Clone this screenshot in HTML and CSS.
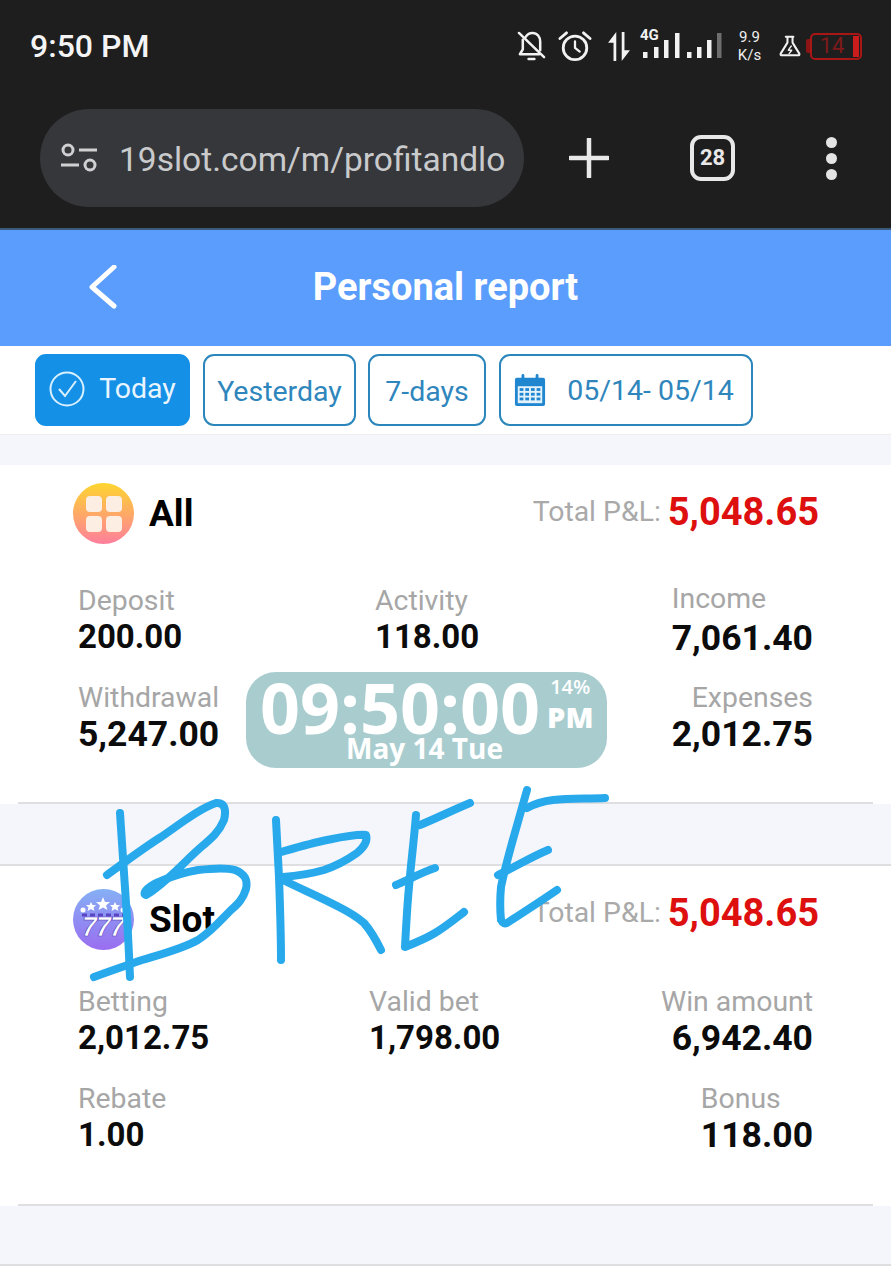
FILE: index.html
```html
<!DOCTYPE html>
<html lang="en">
	<head>
		<meta charset="UTF-8" />
		<title>Personal report</title>
		<link rel="stylesheet" href="styles.css">
	</head>

	<body>
		<div class="screen">
			<div class="browser-top">
				<div class="status-bar">
					<div class="clock-text">9:50 PM</div>
					<div class="status-icons">
						<svg class="ic-bell" viewBox="0 0 30 32" width="29" height="31" fill="none" stroke="#f2f2f2" stroke-width="2.6" stroke-linecap="round" stroke-linejoin="round">
							<path d="M9 6 C11 3 14 2 16 2 C21 2 24 6 24 11 V20" />
							<path d="M6 9 V19 L3 24 H23" />
							<path d="M2 2 L28 27" />
							<path d="M12 29 H18" />
						</svg>
						<svg class="ic-alarm" viewBox="0 0 36 34" width="34" height="32" fill="none" stroke="#f2f2f2" stroke-width="3" stroke-linecap="round" stroke-linejoin="round">
							<circle cx="18" cy="19" r="12.5" />
							<path d="M18 12 V19 L23 23" stroke-width="2.4" />
							<path d="M2 9 L9 3" />
							<path d="M34 9 L27 3" />
						</svg>
						<svg class="ic-arrows" viewBox="0 0 26 34" width="24" height="31" fill="#f2f2f2">
							<path d="M7 33 H10 V1 L1 13 H7 Z" />
							<path d="M16 1 H19 V21 H25 L16 33 Z" />
						</svg>
						<div class="signal">
							<span class="net-label">4G</span>
							<svg viewBox="0 0 80 26" width="80" height="26" fill="#f2f2f2">
								<rect x="0" y="19" width="4.500" height="6" />
								<rect x="11" y="14" width="4.500" height="11" />
								<rect x="21" y="7" width="4.500" height="18" />
								<rect x="32" y="0" width="4.500" height="25" />
								<rect x="44" y="19" width="4.500" height="6" />
								<rect x="54" y="14" width="4.500" height="11" />
								<rect x="64" y="7" width="4.500" height="18" />
								<rect x="74" y="0" width="4.500" height="25" fill="#6e6e6e" />
							</svg>
						</div>
						<div class="speed"><span>9.9</span><span>K/s</span></div>
						<svg class="ic-flask" viewBox="0 0 26 26" width="22" height="22" fill="none" stroke="#f2f2f2" stroke-width="2.4" stroke-linejoin="round" stroke-linecap="round">
							<path d="M8 2 H17 M10 2 V9 L2 22 C1.500 23.500 2 24 4 24 H22 C24 24 24.500 23.500 24 22 L16 9 V2" />
							<path d="M14.500 13 L11 18 H15 L12 22" stroke-width="1.600" />
						</svg>
						<div class="battery">
							<div class="battery-tip"></div>
							<div class="battery-body">14<span class="battery-fill"></span></div>
						</div>
					</div>
				</div>
				<div class="tool-bar">
					<div class="url-pill">
						<svg viewBox="0 0 38 30" width="38" height="30" fill="none" stroke="#d0d0d2" stroke-width="3">
							<circle cx="8" cy="7" r="5" />
							<path d="M19 7 H37" />
							<path d="M1 22 H19" />
							<circle cx="30" cy="22" r="5" />
						</svg>
						<span class="url-text">19slot.com/m/profitandlo</span>
					</div>
					<div class="tool-actions">
						<svg viewBox="0 0 40 40" width="40" height="40" stroke="#e8e8e8" stroke-width="4.500" stroke-linecap="round">
							<path d="M20 1 V39" />
							<path d="M1 20 H39" />
						</svg>
						<div class="tab-count">28</div>
						<div class="dots"><span></span><span></span><span></span></div>
					</div>
				</div>
			</div>

			<div class="page-head">
				<svg class="back-arrow" viewBox="0 0 28 44" width="28" height="44" fill="none" stroke="#fff" stroke-width="5" stroke-linecap="round" stroke-linejoin="round">
					<path d="M25 2 L3 22 L25 41" />
				</svg>
				<h1>Personal report</h1>
			</div>

			<div class="filter-bar">
				<div class="chip chip-active">
					<svg viewBox="0 0 36 36" width="36" height="36" fill="none" stroke="#d8f0ff" stroke-width="2">
						<circle cx="18" cy="18" r="16.500" />
						<path d="M10 18 L16 25 L27 10" />
					</svg>
					<span>Today</span>
				</div>
				<div class="chip chip-yesterday">Yesterday</div>
				<div class="chip chip-week">7-days</div>
				<div class="chip chip-date">
					<svg viewBox="0 0 34 36" width="32" height="34">
						<rect x="1" y="5" width="32" height="30" rx="2" fill="#1f86cf" />
						<rect x="4" y="14" width="26" height="18" fill="#e4f2fb" />
						<rect x="8" y="1" width="3" height="8" rx="1.500" fill="#1f86cf" />
						<rect x="23" y="1" width="3" height="8" rx="1.500" fill="#1f86cf" />
						<g fill="#1f86cf">
							<rect x="6" y="16" width="4" height="3" /><rect x="12" y="16" width="4" height="3" /><rect x="18" y="16" width="4" height="3" /><rect x="24" y="16" width="4" height="3" />
							<rect x="6" y="21" width="4" height="3" /><rect x="12" y="21" width="4" height="3" /><rect x="18" y="21" width="4" height="3" /><rect x="24" y="21" width="4" height="3" />
							<rect x="6" y="26" width="4" height="3" /><rect x="12" y="26" width="4" height="3" /><rect x="18" y="26" width="4" height="3" /><rect x="24" y="26" width="4" height="3" />
						</g>
					</svg>
					<span>05/14- 05/14</span>
				</div>
			</div>

			<div class="gap gap-top"></div>

			<div class="report-card">
				<div class="card-body card-body-all">
					<div class="card-head">
						<div class="card-title">
							<div class="round-ic ic-all"><i></i><i></i><i></i><i></i></div>
							<span>All</span>
						</div>
						<div class="pnl"><span class="pnl-label">Total P&amp;L:</span><span class="pnl-value">5,048.65</span></div>
					</div>
					<div class="stat-grid">
						<div class="stat"><div class="stat-label">Deposit</div><div class="stat-value">200.00</div></div>
						<div class="stat stat-mid"><div class="stat-label">Activity</div><div class="stat-value">118.00</div></div>
						<div class="stat stat-right stat-income"><div class="stat-label">Income</div><div class="stat-value stat-large">7,061.40</div></div>
						<div class="stat"><div class="stat-label">Withdrawal</div><div class="stat-value stat-large">5,247.00</div></div>
						<div class="stat stat-mid"></div>
						<div class="stat stat-right stat-end"><div class="stat-label">Expenses</div><div class="stat-value stat-large">2,012.75</div></div>
					</div>
				</div>
				<div class="card-line"></div>
			</div>

			<div class="gap gap-mid"></div>

			<div class="report-card">
				<div class="card-body">
					<div class="card-head">
						<div class="card-title title-slot">
							<div class="round-ic ic-slot">
								<svg viewBox="0 0 60 60" width="60" height="60">
									<g fill="#fff">
										<path d="M30 8 L32 13 L37 13 L33 16.500 L34.500 21 L30 18.500 L25.500 21 L27 16.500 L23 13 L28 13 Z" />
										<path d="M18 13 L19.500 16 L23 16 L20.500 18.500 L21.500 22 L18 20 L14.500 22 L15.500 18.500 L13 16 L16.500 16 Z" />
										<path d="M42 13 L43.500 16 L47 16 L44.500 18.500 L45.500 22 L42 20 L38.500 22 L39.500 18.500 L37 16 L40.500 16 Z" />
										<circle cx="10" cy="21" r="2.500" />
										<circle cx="50" cy="21" r="2.500" />
									</g>
									<path d="M9 26 H51" stroke="#5a46c4" stroke-width="3" stroke-dasharray="5 3" />
									<text x="30" y="47" text-anchor="middle" class="slot-sevens">777</text>
								</svg>
							</div>
							<span>Slot</span>
						</div>
						<div class="pnl"><span class="pnl-label">Total P&amp;L:</span><span class="pnl-value">5,048.65</span></div>
					</div>
					<div class="stat-grid">
						<div class="stat"><div class="stat-label">Betting</div><div class="stat-value">2,012.75</div></div>
						<div class="stat stat-mid stat-mid-slot"><div class="stat-label">Valid bet</div><div class="stat-value">1,798.00</div></div>
						<div class="stat stat-right stat-end"><div class="stat-label">Win amount</div><div class="stat-value stat-large">6,942.40</div></div>
						<div class="stat"><div class="stat-label">Rebate</div><div class="stat-value">1.00</div></div>
						<div class="stat stat-mid"></div>
						<div class="stat stat-right"><div class="stat-label">Bonus</div><div class="stat-value stat-large">118.00</div></div>
					</div>
				</div>
				<div class="card-line"></div>
			</div>

			<div class="gap gap-tail"></div>

			<div class="clock-widget">
				<div class="widget-main">
					<span class="widget-time">09:50:00</span>
					<div class="widget-side"><span>14%</span><b>PM</b></div>
				</div>
				<div class="widget-date">May 14 Tue</div>
			</div>

			<svg class="scribble" viewBox="0 0 891 1280" width="891" height="1280" fill="none" stroke="#27a9ec" stroke-width="8" stroke-linecap="round" stroke-linejoin="round">
				<path d="M120 813 C122 845 124 875 126 903 C128 930 129 955 130 977" />
				<path d="M107 875 C125 862 142 849 161 837 C180 824 200 808 216 803 C226 802 226 812 224 820 C219 832 212 838 200 848 C184 862 165 884 146 895 C141 893 150 885 161 881 C175 875 186 872 198 870 C215 868 228 868 235 870 C245 874 248 880 246 889 C243 899 238 904 231 910 C220 921 212 931 198 940 C182 949 162 954 142 960 C125 966 110 971 94 977" />
				<path d="M276 820 C277 840 278 858 279 877 C280 905 281 935 281 960" />
				<path d="M281 852 C295 848 312 843 327 840 C342 837 356 834 366 835 C368 841 363 848 357 853 C347 860 336 866 324 870 C310 874 297 876 283 877" />
				<path d="M283 880 C301 889 320 897 339 907 C349 912 357 917 364 923 C371 931 376 940 381 950" />
				<path d="M416 815 C414 840 411 863 409 887 C407 908 406 928 405 947 C415 943 425 939 435 933 C445 927 455 919 464 912" />
				<path d="M420 825 C437 818 453 810 470 803" />
				<path d="M396 885 C409 880 422 872 435 868" />
				<path d="M527 790 C522 808 517 825 512 843 C508 858 504 872 501 887 C500 898 500 910 501 920 C503 924 505 924 507 923 C524 912 541 901 557 890" />
				<path d="M527 808 C536 803 544 801 553 800 C570 798 588 799 605 798" />
				<path d="M498 875 C515 867 531 857 548 850" />
			</svg>
		</div>
	</body>
</html>
```

FILE: styles.css
```css
* {
	box-sizing: border-box;
}

html,
body {
	margin: 0;
	padding: 0;
}

body {
	width: 891px;
	height: 1280px;
	overflow: hidden;
	background: #fff;
	font-family: Roboto, "Liberation Sans", sans-serif;
}

.screen {
	position: relative;
	width: 891px;
	height: 1280px;
	overflow: hidden;
}

/* phone + browser chrome */
.browser-top {
	height: 230px;
	background: #1e1e1e;
	border-bottom: 2px solid #3c5a7c;
}

.status-bar {
	height: 92px;
	padding: 0 29px 0 30px;
	display: flex;
	justify-content: space-between;
	align-items: center;
}

.clock-text {
	color: #f4f4f4;
	font-size: 32px;
	font-weight: 500;
}

.status-icons {
	display: flex;
	align-items: center;
}

.ic-bell {
	margin-right: 12px;
}

.ic-alarm {
	margin-right: 15px;
}

.ic-arrows {
	margin-right: 8px;
}

.signal {
	position: relative;
	width: 84px;
	height: 34px;
	display: flex;
	align-items: flex-end;
	padding: 0 0 4px 4px;
	margin-right: 14px;
}

.net-label {
	position: absolute;
	left: 1px;
	top: -3px;
	color: #f2f2f2;
	font-size: 15px;
	font-weight: 700;
}

.speed {
	display: flex;
	flex-direction: column;
	align-items: center;
	width: 25px;
	color: #eee;
	font-size: 15px;
	line-height: 18px;
	margin-right: 17px;
}

.ic-flask {
	margin-right: 5px;
}

.battery {
	display: flex;
	align-items: center;
	width: 56px;
	height: 28px;
}

.battery-tip {
	width: 4px;
	height: 14px;
	background: #8d1414;
	border-radius: 2px 0 0 2px;
}

.battery-body {
	position: relative;
	flex: 1;
	height: 27px;
	border: 2.500px solid #a81616;
	border-radius: 5px;
	color: #7e1a1a;
	font-size: 22px;
	line-height: 22px;
	text-align: center;
	padding-right: 8px;
}

.battery-fill {
	position: absolute;
	right: 1px;
	top: 1px;
	bottom: 1px;
	width: 6px;
	background: #cc1c1c;
}

.tool-bar {
	display: flex;
	align-items: flex-start;
	padding: 17px 0 0 40px;
}

.url-pill {
	width: 484px;
	height: 98px;
	border-radius: 49px;
	background: #36373b;
	display: flex;
	align-items: center;
	padding-left: 20px;
	gap: 21px;
}

.url-text {
	margin-top: 3px;
	color: #c9cacc;
	font-size: 33.500px;
	white-space: nowrap;
	width: 387px;
	overflow: hidden;
}

.tool-actions {
	display: flex;
	align-items: center;
	height: 98px;
	padding-left: 45px;
}

.tab-count {
	width: 45px;
	height: 46px;
	margin-left: 81px;
	border: 4px solid #e8e8e8;
	border-radius: 11px;
	color: #e8e8e8;
	font-size: 22px;
	font-weight: 700;
	line-height: 38px;
	text-align: center;
}

.dots {
	display: flex;
	flex-direction: column;
	gap: 5px;
	margin-left: 91px;
}

.dots span {
	width: 11px;
	height: 11px;
	border-radius: 50%;
	background: #e4e4e4;
}

/* blue title */
.page-head {
	position: relative;
	height: 116px;
	background: #5b9dfd;
	display: flex;
	align-items: center;
	justify-content: center;
}

.page-head h1 {
	margin: 0 0 2px;
	color: #fff;
	font-size: 38px;
	font-weight: 700;
}

.back-arrow {
	position: absolute;
	left: 89px;
	top: 35px;
}

/* date filter row */
.filter-bar {
	height: 89px;
	padding: 8px 0 0 35px;
	display: flex;
	align-items: flex-start;
	gap: 12px;
	background: #fff;
	border-bottom: 1px solid #ececf1;
}

.chip {
	height: 72px;
	border: 2px solid #2a86bb;
	border-radius: 11px;
	display: flex;
	align-items: center;
	justify-content: center;
	color: #2f86bd;
	font-size: 28.500px;
}

.chip-active {
	width: 155px;
	background: #1490e6;
	border-color: #1490e6;
	color: #e8f5ff;
	gap: 14px;
	padding-bottom: 3px;
}

.chip-yesterday {
	width: 153px;
	margin-left: 1px;
	padding-top: 2px;
}

.chip-week {
	width: 118px;
	padding-top: 2px;
}

.chip-date {
	width: 254px;
	margin-left: 1px;
	gap: 21px;
	padding-right: 4px;
}

/* report cards */
.gap {
	background: #f5f6fb;
}

.gap-top {
	height: 30px;
}

.gap-mid {
	height: 62px;
	border-bottom: 2px solid #dfdfe2;
}

.gap-tail {
	height: 60px;
	border-bottom: 2px solid #dfdfe2;
}

.report-card {
	background: #fff;
}

.card-body {
	height: 338px;
	padding: 0 78px;
}

.card-body-all {
	height: 337px;
}

.card-line {
	height: 2px;
	margin: 0 18px;
	background: #dfdfe2;
}

.card-head {
	display: flex;
	justify-content: space-between;
	align-items: center;
	height: 96px;
}

.card-title {
	display: flex;
	align-items: center;
	gap: 15px;
	margin-left: -5px;
	color: #000;
	font-size: 37px;
	font-weight: 700;
}

.title-slot {
	margin-top: 10px;
}

.round-ic {
	width: 61px;
	height: 61px;
	border-radius: 50%;
	flex-shrink: 0;
}

.ic-all {
	display: grid;
	grid-template-columns: 16px 16px;
	grid-auto-rows: 16px;
	gap: 4px;
	padding: 13px 0 0 13px;
	background: linear-gradient(180deg, #fed52f, #fe7f9c);
}

.ic-all i {
	background: #fdeee4;
	border-radius: 4px;
}

.ic-slot {
	background: linear-gradient(180deg, #85b0f5, #9a6df0);
}

.slot-sevens {
	font-family: "Liberation Sans", sans-serif;
	font-size: 27px;
	font-weight: 700;
	font-style: italic;
	letter-spacing: -1px;
	fill: #fff;
	stroke: #5a46c4;
	stroke-width: 0.700px;
}

.pnl {
	display: flex;
	align-items: center;
	gap: 7px;
	margin-right: -6px;
	padding-bottom: 3px;
}

.pnl-label {
	color: #a9a9a9;
	font-size: 28.400px;
}

.pnl-value {
	color: #dd0f0f;
	font-size: 38px;
	font-weight: 700;
}

.stat-grid {
	display: grid;
	grid-template-columns: 297px 297px minmax(0, 1fr);
	grid-auto-rows: 97px;
	padding-top: 23px;
}

.stat-label {
	color: #a6a6a6;
	font-size: 28.400px;
	line-height: 34px;
	white-space: nowrap;
}

.stat-value {
	margin-top: 1px;
	color: #0c0c0c;
	font-size: 33px;
	font-weight: 700;
	line-height: 36px;
	white-space: nowrap;
}

.stat-large {
	font-size: 35.500px;
}

.stat-right {
	justify-self: end;
}

.stat-income {
	margin-top: -2px;
}

.stat-income .stat-value {
	margin-top: 4px;
}

.stat-end {
	text-align: right;
}

.stat-mid-slot {
	margin-left: -6px;
}

/* floating clock widget + marker scribble lie over the page */
.clock-widget {
	position: absolute;
	left: 246px;
	top: 672px;
	width: 361px;
	height: 96px;
	border-radius: 30px;
	background: #a9cdcf;
	color: #fff;
	font-family: "Open Sans", sans-serif;
	font-weight: 700;
	text-align: center;
}

.widget-main {
	display: flex;
	align-items: flex-start;
	padding-left: 14px;
}

.widget-time {
	font-size: 70px;
	line-height: 70px;
}

.widget-side {
	display: flex;
	flex-direction: column;
	align-items: center;
	margin-left: 7px;
	padding-top: 3px;
}

.widget-side span {
	font-size: 20px;
	font-weight: 600;
	line-height: 24px;
}

.widget-side b {
	font-size: 29px;
	line-height: 36px;
}

.widget-date {
	position: absolute;
	left: 0;
	right: 0;
	top: 58px;
	font-size: 28px;
	line-height: 36px;
	padding-right: 4px;
}

.scribble {
	position: absolute;
	left: 0;
	top: 0;
	pointer-events: none;
}
```
